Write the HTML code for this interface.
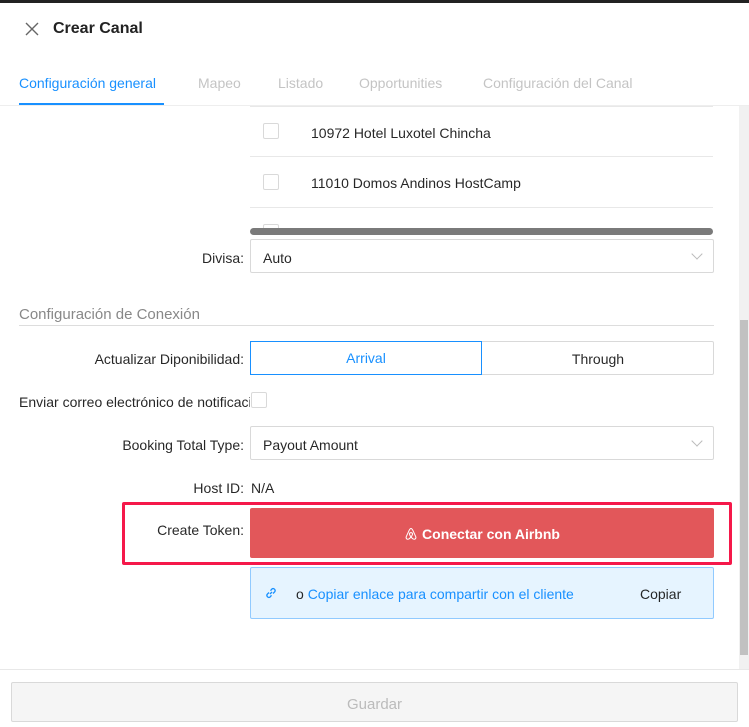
<!DOCTYPE html>
<html><head><meta charset="utf-8"><style>
*{box-sizing:border-box;margin:0;padding:0}
body{width:749px;height:714px;position:relative;overflow:hidden;background:#fff;font-family:"Liberation Sans",sans-serif;font-size:14px;color:rgba(0,0,0,.85)}
.a{position:absolute;white-space:nowrap}
.lbl{position:absolute;right:505px;white-space:nowrap}
.box{position:absolute;left:250px;width:464px;border:1px solid #d9d9d9;border-radius:2px;background:#fff}
.chev{position:absolute;right:12px;top:50%;width:8px;height:8px;border-right:1px solid #bbb;border-bottom:1px solid #bbb;transform:translateY(-75%) rotate(45deg)}
.cb{position:absolute;width:16px;height:16px;border:1px solid #d9d9d9;border-radius:2px;background:#fff}
.row{position:absolute;left:250px;width:463px;border-top:1px solid #e8e8e8}
</style></head><body>
<div class="a" style="left:0;top:0;width:749px;height:3px;background:#222"></div>
<div class="a" style="left:23px;top:20px;width:18px;height:18px">
<svg width="18" height="18" viewBox="0 0 18 18"><path d="M3 3L15 15M15 3L3 15" stroke="#666" stroke-width="1.4"/></svg></div>
<div class="a" style="left:53px;top:20px;font-size:16px;font-weight:bold;color:#222">Crear Canal</div>
<div class="a" style="left:19px;top:75px;color:#1890ff">Configuración general</div>
<div class="a" style="left:19px;top:103px;width:145px;height:2px;background:#1890ff"></div>
<div class="a" style="left:198px;top:75px;color:#c4c4c4">Mapeo</div>
<div class="a" style="left:278px;top:75px;color:#c4c4c4">Listado</div>
<div class="a" style="left:359px;top:75px;color:#c4c4c4">Opportunities</div>
<div class="a" style="left:483px;top:75px;color:#c4c4c4">Configuración del Canal</div>
<div class="a" style="left:0;top:105px;width:749px;height:1px;background:#eee"></div>
<div class="row" style="top:106px"></div>
<div class="cb" style="left:263px;top:123px"></div>
<div class="a" style="left:311px;top:125px">10972 Hotel Luxotel Chincha</div>
<div class="row" style="top:156px"></div>
<div class="cb" style="left:263px;top:174px"></div>
<div class="a" style="left:311px;top:175px">11010 Domos Andinos HostCamp</div>
<div class="row" style="top:207px"></div>
<div class="a" style="left:250px;top:218px;width:463px;height:14px;overflow:hidden">
<div class="cb" style="left:13px;top:6px"></div>
<div class="a" style="left:61px;top:8px">11015 WITHOST - Departamentos Chile</div></div>
<div class="a" style="left:250px;top:228px;width:463px;height:7px;border-radius:4px;background:#7a7a7a"></div>
<div class="lbl" style="top:250px">Divisa:</div>
<div class="box" style="top:239px;height:34px"><span class="a" style="left:12px;top:10px">Auto</span><i class="chev"></i></div>
<div class="a" style="left:19px;top:306px;font-size:15px;color:#888">Configuración de Conexión</div>
<div class="a" style="left:19px;top:325px;width:695px;height:1px;background:#ddd"></div>
<div class="lbl" style="top:351px">Actualizar Diponibilidad:</div>
<div class="box" style="top:341px;height:34px"></div>
<div class="a" style="left:250px;top:341px;width:232px;height:34px;border:1px solid #1890ff;color:#1890ff;text-align:center;line-height:33px">Arrival</div>
<div class="a" style="left:482px;top:351px;width:232px;text-align:center">Through</div>
<div class="a" style="left:19px;top:394px;width:231px;overflow:hidden">Enviar correo electrónico de notificaciones</div>
<div class="cb" style="left:251px;top:392px"></div>
<div class="lbl" style="top:437px">Booking Total Type:</div>
<div class="box" style="top:426px;height:34px"><span class="a" style="left:12px;top:10px">Payout Amount</span><i class="chev"></i></div>
<div class="lbl" style="top:480px">Host ID:</div>
<div class="a" style="left:251px;top:480px">N/A</div>
<div class="a" style="left:122px;top:502px;width:610px;height:63px;border:3px solid #f5184a;border-radius:2px"></div>
<div class="lbl" style="top:522px">Create Token:</div>
<div class="a" style="left:250px;top:508px;width:464px;height:50px;background:#e2575a;border-radius:2px;color:#fff;font-weight:bold;text-align:center;line-height:52px">
<svg width="14" height="14" viewBox="0 0 14 14" style="vertical-align:-2px;margin-right:4px"><path d="M7 1.5C6 1.5 5.6 2.4 5 3.7L2.3 9.6C1.6 11.3 3 12.8 4.6 12.1C5.6 11.6 6.4 10.7 7 10C7.6 10.7 8.4 11.6 9.4 12.1C11 12.8 12.4 11.3 11.7 9.6L9 3.7C8.4 2.4 8 1.5 7 1.5ZM7 10C6 8.7 5.4 7.6 5.5 6.8C5.6 6 6.3 5.6 7 5.6C7.7 5.6 8.4 6 8.5 6.8C8.6 7.6 8 8.7 7 10Z" fill="none" stroke="#fff" stroke-width="1"/></svg>Conectar con Airbnb</div>
<div class="a" style="left:250px;top:567px;width:464px;height:52px;background:#e6f4ff;border:1px solid #91caff;border-radius:2px"></div>
<div class="a" style="left:264px;top:586px;color:#1890ff">
<svg width="14" height="14" viewBox="0 0 14 14"><path d="M6 8L8 6M5 6.5L3.3 8.2a2 2 0 0 0 2.8 2.8L7.5 9.3M9 7.5l1.7-1.7a2 2 0 0 0-2.8-2.8L6.5 4.7" fill="none" stroke="#1890ff" stroke-width="1.3"/></svg></div>
<div class="a" style="left:296px;top:586px">o <span style="color:#1890ff">Copiar enlace para compartir con el cliente</span></div>
<div class="a" style="left:640px;top:586px">Copiar</div>
<div class="a" style="left:739px;top:106px;width:10px;height:563px;background:#f1f1f1"></div>
<div class="a" style="left:740px;top:320px;width:8px;height:335px;background:#c1c1c1"></div>
<div class="a" style="left:0;top:669px;width:749px;height:1px;background:#e8e8e8"></div>
<div class="a" style="left:11px;top:682px;width:727px;height:40px;background:#f5f5f5;border:1px solid #d9d9d9;border-radius:2px;color:#bbb;text-align:center;line-height:44px;font-size:15px">Guardar</div>
</body></html>
